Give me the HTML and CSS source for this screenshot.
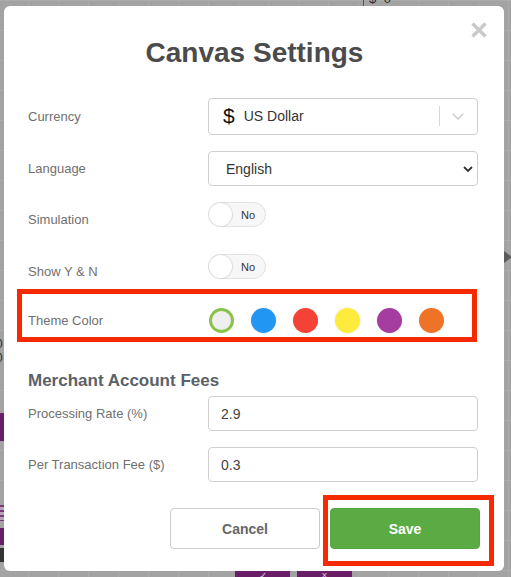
FILE: index.html
```html
<!DOCTYPE html>
<html lang="en">
<head>
<meta charset="utf-8">
<title>Canvas Settings</title>
<link rel="stylesheet" href="styles.css">
</head>
<body>
<div class="canvas">
  <span class="bg-amount">$ 0</span>
  <span class="bg-vline"></span>
  <span class="bg-zero bg-zero-1">0</span>
  <span class="bg-zero bg-zero-2">0</span>
  <span class="bg-purple bg-purple-1"></span>
  <span class="bg-stripes"></span>
  <span class="bg-purple bg-purple-2"></span>
  <span class="bg-dark"></span>
  <span class="bg-btn bg-btn-1">&#10003;</span>
  <span class="bg-btn bg-btn-2">&#215;</span>
  <span class="bg-arrow"></span>
</div>

<div class="modal">
  <button class="close" aria-label="Close">
    <svg width="16" height="16" viewBox="0 0 16 16"><path d="M1.5 1.5 L14.5 14.5 M14.5 1.5 L1.5 14.5" stroke="#c9c9c9" stroke-width="3.2" stroke-linecap="butt"/></svg>
  </button>
  <h1 class="title">Canvas Settings</h1>

  <div class="row row-first row-tall">
    <span class="label">Currency</span>
    <div class="control select-currency">
      <span class="dollar">$</span>
      <span class="currency-text">US Dollar</span>
      <span class="sep"></span>
      <svg class="chev-light" width="12" height="7" viewBox="0 0 12 7"><path d="M0.8 0.8 L6 6 L11.2 0.8" fill="none" stroke="#cccccc" stroke-width="1.4"/></svg>
    </div>
  </div>

  <div class="row">
    <span class="label">Language</span>
    <div class="control select-lang">
      <span class="lang-text">English</span>
      <svg class="chev-dark" width="10" height="6" viewBox="0 0 10 6"><path d="M1 1 L5 5 L9 1" fill="none" stroke="#333" stroke-width="1.8"/></svg>
    </div>
  </div>

  <div class="row">
    <span class="label">Simulation</span>
    <div class="toggle"><span class="knob"></span><span class="toggle-text">No</span></div>
  </div>

  <div class="row row-y">
    <span class="label">Show Y &amp; N</span>
    <div class="toggle"><span class="knob"></span><span class="toggle-text">No</span></div>
  </div>

  <div class="row row-theme">
    <span class="label">Theme Color</span>
    <div class="swatches">
      <span class="swatch swatch-selected"></span>
      <span class="swatch" style="background:#2196f3"></span>
      <span class="swatch" style="background:#f44336"></span>
      <span class="swatch" style="background:#ffeb3b"></span>
      <span class="swatch" style="background:#a53ca0"></span>
      <span class="swatch" style="background:#ee7326"></span>
    </div>
  </div>

  <h2 class="section">Merchant Account Fees</h2>

  <div class="row row-proc">
    <span class="label">Processing Rate (%)</span>
    <div class="control input"><span class="input-text">2.9</span></div>
  </div>

  <div class="row">
    <span class="label">Per Transaction Fee ($)</span>
    <div class="control input"><span class="input-text">0.3</span></div>
  </div>

  <div class="actions">
    <button class="btn btn-cancel">Cancel</button>
    <button class="btn btn-save">Save</button>
  </div>
</div>
</body>
</html>
```

FILE: styles.css
```css
* { box-sizing: border-box; }

html, body {
  margin: 0;
  padding: 0;
  width: 511px;
  height: 577px;
  overflow: hidden;
}

body {
  position: relative;
  background-color: #a3a3a3;
  background-image:
    linear-gradient(#ababab 1px, transparent 1px),
    linear-gradient(90deg, #ababab 1px, transparent 1px);
  background-size: 30px 30px;
  background-position: 28px 0;
  font-family: "Liberation Sans", Arial, Helvetica, sans-serif;
  padding-top: 6px;
  padding-left: 4px;
}

/* background canvas pieces (behind the dimmed modal) */
.canvas {
  position: absolute;
  inset: 0;
}
.bg-amount {
  position: absolute;
  left: 369px;
  top: -9px;
  font-size: 13px;
  color: #2a2a2a;
  letter-spacing: 2px;
}
.bg-vline {
  position: absolute;
  left: 363px;
  top: 0;
  width: 1px;
  height: 6px;
  background: #555;
}
.bg-zero {
  position: absolute;
  left: -4px;
  font-size: 12px;
  color: #2a2a2a;
}
.bg-zero-1 { top: 337px; }
.bg-zero-2 { top: 351px; }
.bg-purple {
  position: absolute;
  left: 0;
  width: 6px;
  background: #6a1e67;
}
.bg-purple-1 { top: 413px; height: 28px; }
.bg-purple-2 { top: 528px; height: 17px; }
.bg-stripes {
  position: absolute;
  left: 0;
  top: 505px;
  width: 6px;
  height: 16px;
  background: repeating-linear-gradient(#7a3a77 0 2px, #b9a3b7 2px 5px);
}
.bg-dark {
  position: absolute;
  left: 0;
  top: 548px;
  width: 6px;
  height: 14px;
  background: #333;
}
.bg-btn {
  position: absolute;
  top: 571px;
  height: 10px;
  background: #6a1e67;
  color: #d9c7d8;
  font-size: 10px;
  line-height: 10px;
  text-align: center;
}
.bg-btn-1 { left: 235px; width: 55px; }
.bg-btn-2 { left: 297px; width: 55px; }
.bg-arrow {
  position: absolute;
  left: 504px;
  top: 251px;
  width: 0;
  height: 0;
  border-top: 6px solid transparent;
  border-bottom: 6px solid transparent;
  border-left: 8px solid #5c5c5c;
}

/* modal */
.modal {
  position: relative;
  width: 500px;
  height: 565px;
  background: #fff;
  border-radius: 6px;
  padding: 31px 26px 0 24px;
}

.close {
  position: absolute;
  top: 16px;
  right: 17px;
  width: 16px;
  height: 16px;
  padding: 0;
  border: 0;
  background: none;
  line-height: 0;
}

.title {
  margin: 0 0 29px;
  font-size: 28px;
  line-height: 32px;
  font-weight: bold;
  color: #4b4b4b;
  text-align: center;
  padding-left: 3px;
}

.row {
  display: flex;
  align-items: center;
  height: 35px;
  margin-top: 16px;
}
.row-first { margin-top: 0; }
.row-tall { height: 37px; }
.row-y { margin-top: 17px; }

.label {
  width: 180px;
  flex: none;
  font-size: 13px;
  color: #707070;
  padding-left: 0;
}

.control {
  width: 270px;
  height: 100%;
  border: 1px solid #cfcfcf;
  border-radius: 4px;
  display: flex;
  align-items: center;
  background: #fff;
}

.select-currency { padding-left: 14px; padding-right: 12px; }
.dollar {
  font-size: 21px;
  color: #111;
  margin-right: 9px;
  line-height: 1;
  position: relative;
  top: -1px;
}
.currency-text {
  font-size: 14px;
  color: #333;
  flex: 1;
  position: relative;
  top: -1px;
}
.sep {
  width: 1px;
  height: 20px;
  background: #d6d6d6;
  margin-right: 12px;
  position: relative;
  top: -1px;
}
.chev-light { position: relative; top: 0; margin-right: 1px; }

.select-lang { padding-left: 17px; padding-right: 4px; }
.lang-text {
  font-size: 14px;
  color: #333;
  flex: 1;
}

.toggle {
  align-self: flex-start;
  position: relative;
  width: 58px;
  height: 25px;
  border: 1px solid #e2e2e2;
  border-radius: 13px;
  background: #f7f7f7;
  display: flex;
  align-items: center;
  justify-content: flex-end;
  padding-right: 10px;
}
.knob {
  position: absolute;
  left: 0;
  top: 0;
  width: 23px;
  height: 23px;
  border-radius: 50%;
  background: #fff;
  box-shadow: 0 0 2px rgba(0,0,0,0.18), 1px 0 1px rgba(0,0,0,0.06);
}
.toggle-text {
  font-size: 11px;
  color: #333;
}

.row-theme {
  position: relative;
  height: 30px;
  margin-top: 16px;
}
.row-theme::after {
  content: "";
  position: absolute;
  top: -16px;
  bottom: -7px;
  left: -11px;
  right: 1px;
  border: 5px solid #f52a00;
  pointer-events: none;
}
.swatches {
  display: flex;
  gap: 17px;
  padding-left: 1px;
}
.swatch {
  width: 25px;
  height: 25px;
  border-radius: 50%;
  box-shadow: 0 0 0 1px rgba(0,0,0,0.04);
}
.swatch-selected {
  background: #efefef;
  border: 3px solid #8bc34a;
  box-shadow: none;
}

.section {
  margin: 36px 0 0;
  font-size: 17px;
  line-height: 20px;
  font-weight: bold;
  color: #5b6168;
}

.row-proc { margin-top: 5px; }

.input { padding-left: 12px; }
.input-text {
  font-size: 14px;
  color: #444;
}

.actions {
  display: flex;
  justify-content: flex-end;
  gap: 10px;
  margin-top: 26px;
  margin-right: -2px;
}
.btn {
  width: 150px;
  height: 41px;
  border-radius: 4px;
  font-family: "Liberation Sans", Arial, Helvetica, sans-serif;
  font-size: 14px;
  font-weight: bold;
  padding: 0;
}
.btn-cancel {
  background: #fff;
  border: 1px solid #cccccc;
  color: #666;
}
.btn-save {
  position: relative;
  background: #5aab43;
  border: 1px solid #55a540;
  color: #fff;
}
.btn-save::after {
  content: "";
  position: absolute;
  top: -14px;
  bottom: -18px;
  left: -8px;
  right: -15px;
  border: 5px solid #f52a00;
  pointer-events: none;
}
```
